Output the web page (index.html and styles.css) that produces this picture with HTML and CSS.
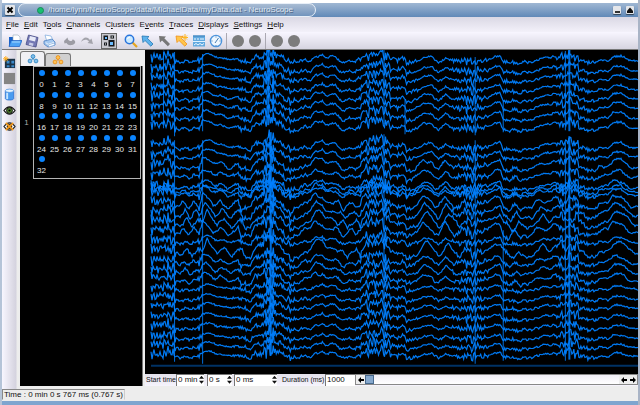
FILE: index.html
```html
<!DOCTYPE html>
<html lang="en">
<head>
<meta charset="utf-8">
<title>myData.dat - NeuroScope</title>
<link rel="stylesheet" href="styles.css">
</head>
<body>
<div class="window">
  <header class="titlebar">
    <button class="winbtn" aria-label="Close"><svg width="10" height="10" viewBox="0 0 10 10"><path d="M2.500 2.500L7.500 7.500M7.500 2.500L2.500 7.500" stroke="#000" stroke-width="2"/></svg></button>
    <div class="caption"><span class="lamp"></span><span>/home/lynn/NeuroScope/data/MichaelData/myData.dat - NeuroScope</span></div>
    <div class="winbtns">
      <button class="winbtn small" aria-label="Minimize"><svg width="8" height="8" viewBox="0 0 8 8"><path d="M2 6H7" stroke="#333" stroke-width="2"/></svg></button>
      <button class="winbtn small" aria-label="Maximize"><svg width="8" height="8" viewBox="0 0 8 8"><path d="M1 5L4 1.500L7 5V7H1Z" fill="#111"/></svg></button>
    </div>
  </header>

  <nav class="menubar">
    <button><u>F</u>ile</button><button><u>E</u>dit</button><button>T<u>o</u>ols</button><button><u>C</u>hannels</button><button>C<u>l</u>usters</button><button>E<u>v</u>ents</button><button><u>T</u>races</button><button><u>D</u>isplays</button><button><u>S</u>ettings</button><button><u>H</u>elp</button>
  </nav>

  <div class="toolbar">
    <div class="group">
      <button aria-label="Open"><svg viewBox="0 0 14 14"><path d="M1 3H5L6 4.500H11V12H1Z" fill="#1c63c8"/><path d="M5 1H10L12 3V8H5Z" fill="#fff" stroke="#9ab" stroke-width=".6"/><path d="M3 6.500H14L11.500 12.500H1Z" fill="#4da3f5" stroke="#1a5cc0" stroke-width=".7"/><path d="M4 8H12" stroke="#a8d8ff"/></svg></button>
      <button aria-label="Save"><svg viewBox="0 0 14 14"><path d="M3.500 1L13 3.500L11 13L1 10.500Z" fill="#7478b4" stroke="#484c88" stroke-width=".8"/><path d="M5 2L11 3.600L10 7.500L4 6Z" fill="#e8eaf8"/><path d="M4.500 8.500L8.500 9.500L8 12L3.700 11Z" fill="#c9cde8"/></svg></button>
      <button aria-label="Print"><svg viewBox="0 0 14 14"><path d="M3 1L9 2L11 6L5 8Z" fill="#fff" stroke="#7aa8dc" stroke-width=".7"/><path d="M2 7L10 5L13 8V11L6 13L2 10Z" fill="#a4c8f0" stroke="#4d7fc0" stroke-width=".8"/><path d="M4 8.500L6 10.500L12 8.500" fill="none" stroke="#fff"/><path d="M6 11L12 9L13 11L7 13Z" fill="#f3f8ff" stroke="#6696cf" stroke-width=".5"/></svg></button>
    </div>
    <div class="group">
      <button aria-label="Undo"><svg viewBox="0 0 14 14"><path d="M1 7L4.500 3.500L5 5.500C7 7.500 9 7.500 9.500 5.500C13 6 13.500 10 9 11C6 11.500 4 10.500 3.500 9L1.500 9.500Z" fill="#9c9ca4"/></svg></button>
      <button aria-label="Redo"><svg viewBox="0 0 14 14"><path d="M1 8C3 3 7 2 10 6L11.500 4.500L13 10L7.500 9L9 7.500C7 5 4 5 1 8Z" fill="#a4a4ac"/></svg></button>
    </div>
    <div class="group">
      <button class="pressed" aria-label="Show traces"><svg viewBox="0 0 14 14"><path d="M1.500 1.500H6V6H1.500ZM2 8.500H5V11.500H2ZM6.500 6H12.500V12.500H6.500ZM8.500 1.500H12V4.500H8.500Z" fill="#15181d"/><path d="M3 3H5V5H3ZM8 8H11V11H8Z" fill="#6bbcff"/><path d="M9.500 3H11M3 10H4" stroke="#fff"/></svg></button>
    </div>
    <div class="group">
      <button aria-label="Zoom"><svg viewBox="0 0 14 14"><path d="M8.500 8.500L13 13" stroke="#e5a51e" stroke-width="2.200"/><circle cx="5.500" cy="5.500" r="4.200" fill="#cbeaff" stroke="#2874dd" stroke-width="1.500"/><path d="M3.500 5Q4 3.200 6 3" fill="none" stroke="#fff"/></svg></button>
      <button aria-label="Select time"><svg viewBox="0 0 14 14"><path d="M1 2L8 2.500L6.300 4.200L12 10L9.800 12.200L4 6.500L2 8.500Z" fill="#5cb2ec" stroke="#2477b4" stroke-width=".8"/></svg></button>
      <button aria-label="Select"><svg viewBox="0 0 14 14"><path d="M1 2L8 2.500L6.300 4.200L12 10L9.800 12.200L4 6.500L2 8.500Z" fill="#777"/></svg></button>
      <button aria-label="Add event"><svg viewBox="0 0 14 14"><path d="M1 2L8 2.500L6.300 4.200L12 10L9.800 12.200L4 6.500L2 8.500Z" fill="#ffc54a" stroke="#f09018" stroke-width=".8"/><path d="M10 0V7M7 3.500H13M8 1.500L12 5.500M12 1.500L8 5.500" stroke="#ffb620"/></svg></button>
      <button aria-label="Draw time line"><svg viewBox="0 0 14 14"><path d="M1 1.500H13V12.500H1Z" fill="#61a9df"/><path d="M1 7.500H13" stroke="#dff2ff"/><path d="M2 11L4 9.500L6 11L8 9.500L10 11L12 9.500M3 4V6M6 4V6M9 4V6M11 4V6" stroke="#eef8ff" fill="none"/><path d="M1 2H13" stroke="#3c80b9"/></svg></button>
      <button aria-label="Clock"><svg viewBox="0 0 14 14"><circle cx="7" cy="7" r="5.600" fill="#eef7ff" stroke="#4e95dc" stroke-width="1.400"/><path d="M6 9L9.500 4M7 2.500V3.500M2.500 7H3.500M10.500 7H11.500M7 11V12" stroke="#477baf"/></svg></button>
    </div>
    <div class="group sep">
      <button aria-label="Previous event"><i class="disc"></i></button><button aria-label="Next event"><i class="disc"></i></button>
    </div>
    <div class="group sep">
      <button aria-label="Previous cluster"><i class="disc"></i></button><button aria-label="Next cluster"><i class="disc"></i></button>
    </div>
  </div>

  <main class="work">
    <aside class="sidebar">
      <button aria-label="New display"><svg viewBox="0 0 14 14"><path d="M2 3H13V13H2Z" fill="#1d3346"/><path d="M4 5H7V8H4ZM9 5H12V8H9ZM4 10H7V12H4ZM9 10H12V12H9Z" fill="#3b89c9"/><path d="M3 0V6M0 3H6M1 1L5 5M5 1L1 5" stroke="#ffad20"/></svg></button>
      <button aria-label="Discard"><svg viewBox="0 0 14 14"><path d="M1 1H13V13H1Z" fill="#858585"/></svg></button>
      <button aria-label="Trash"><svg viewBox="0 0 14 14"><path d="M2.500 3V11.500C3 13.500 11 13.500 11.500 11.500V3" fill="#4a9cf0" stroke="#2a6fd0" stroke-width=".8"/><path d="M4.500 5V12" stroke="#c8e6ff" stroke-width="2"/><ellipse cx="7" cy="3" rx="4.500" ry="1.800" fill="#e6f4ff" stroke="#4a90e0" stroke-width=".8"/></svg></button>
      <button aria-label="Show"><svg viewBox="0 0 14 14"><path d="M1 7Q7 -1 13 7Q7 15 1 7Z" fill="#fff" stroke="#111" stroke-width="1.300"/><circle cx="7" cy="7" r="3.200" fill="#508030" stroke="#111"/><circle cx="7" cy="7" r="1.200" fill="#000"/></svg></button>
      <button aria-label="Hide"><svg viewBox="0 0 14 14"><path d="M1 7Q7 -1 13 7Q7 15 1 7Z" fill="#fff" stroke="#222" stroke-width="1.300"/><circle cx="7" cy="7" r="3" fill="#443515"/><path d="M3 3L11 11M11 3L3 11" stroke="#f39a1e" stroke-width="1.800"/></svg></button>
    </aside>

    <section class="palette">
      <div class="tabs">
        <button class="tab active" aria-label="Anatomical groups"><svg viewBox="0 0 12 10"><g fill="#7fc0ec" stroke="#277fbd" stroke-width=".8"><circle cx="6" cy="2.500" r="1.900"/><circle cx="3" cy="7" r="1.900"/><circle cx="9" cy="7" r="1.900"/></g><path d="M6 4V6" stroke="#277fbd"/></svg></button>
        <button class="tab" aria-label="Spike groups"><svg viewBox="0 0 12 10"><g fill="#ffc354" stroke="#e98b13" stroke-width=".8"><circle cx="6" cy="2.500" r="1.900"/><circle cx="3" cy="7" r="1.900"/><circle cx="9" cy="7" r="1.900"/></g><path d="M6 4V6" stroke="#e98b13"/></svg></button>
      </div>
      <div class="groups">
        <span class="gid">1</span>
        <ul class="channels" id="channels"></ul>
      </div>
    </section>

    <section class="view">
      <svg class="traces" id="traces" viewBox="145 50 492 323" preserveAspectRatio="none"></svg>
      <form class="timebar">
        <label for="min">Start time</label>
        <span class="spin w-min"><input id="min" value="0 min"><i></i></span>
        <span class="spin w-sec"><input aria-label="Seconds" value="0 s"><i></i></span>
        <span class="spin w-ms"><input aria-label="Milliseconds" value="0 ms"><i></i></span>
        <label class="dur" for="dur">Duration (ms)</label>
        <span class="spin w-dur"><input id="dur" value="1000"></span>
        <div class="scroll">
          <button type="button" aria-label="Back"><svg viewBox="0 0 8 8"><path d="M1 4L4 1V3H7V5H4V7Z"/></svg></button>
          <input type="range" aria-label="Position" min="0" max="100" value="0">
          <button type="button" aria-label="Step back"><svg viewBox="0 0 8 8"><path d="M1 4L4 1V3H7V5H4V7Z"/></svg></button>
          <button type="button" aria-label="Forward"><svg viewBox="0 0 8 8"><path d="M7 4L4 1V3H1V5H4V7Z"/></svg></button>
        </div>
      </form>
    </section>
  </main>

  <footer class="status"><span>Time : 0 min 0 s 767 ms (0.767 s)</span></footer>
</div>
<script src="app.js"></script>
</body>
</html>
```
FILE: styles.css
```css
* { box-sizing: border-box; }
body {
  margin: 0;
  background: #fff;
  color: #111;
  font: 8px/10px "Liberation Sans", sans-serif;
}
button { margin: 0; padding: 0; border: 0; background: none; font: inherit; color: inherit; display: block; }
input { margin: 0; padding: 0; border: 0; font: inherit; color: inherit; min-width: 0; }
svg { display: block; }

.window {
  display: flex;
  flex-direction: column;
  min-height: 100vh;
  padding-top: 3px;
  border-left: 2px solid #b5c4d8;
  border-right: 2px solid #a9b4c6;
  border-bottom: 1px solid #8ba0ba;
  background: #ededed;
}

.titlebar {
  display: flex;
  align-items: center;
  height: 14px;
  background: linear-gradient(#9fb7d3, #6089b8);
  box-shadow: 0 -3px #fff;
}
.winbtn {
  width: 10px;
  height: 10px;
  margin-left: 3px;
  background: #e4e6ea;
  border-radius: 1px;
  box-shadow: 0 1px 1px #345;
}
.small { width: 8px; height: 8px; margin: 0; }
.winbtns { display: flex; gap: 5px; margin-left: auto; padding-right: 4px; }
.caption {
  display: flex;
  align-items: center;
  gap: 4px;
  width: 298px;
  height: 14px;
  margin-left: 3px;
  padding-left: 18px;
  border: 1px solid #e8eff8;
  border-radius: 8px;
  background: linear-gradient(#a9bcd3, #7294bd);
  color: #dfe6f0;
  text-shadow: 1px 1px #4b6585;
  white-space: nowrap;
}
.lamp { width: 7px; height: 7px; border-radius: 50%; background: #17c070; border: 1px solid #178a58; }

.menubar {
  display: flex;
  gap: 5px;
  height: 15px;
  padding: 3px 4px 0;
  background: linear-gradient(#dad8e4, #f3f1fa);
}
.menubar button { height: 10px; }
.menubar u { text-decoration-thickness: 1px; text-underline-offset: 1px; }

.toolbar {
  display: flex;
  align-items: center;
  gap: 3px;
  height: 18px;
  padding-left: 2px;
  background: linear-gradient(#f8f6ff, #d6d4e0);
  border-bottom: 1px solid #777;
}
.group { display: flex; gap: 3px; padding-left: 4px; }
.group svg { width: 14px; height: 14px; }
.sep { border-left: 1px solid #aaa8b2; }
.group button { display: grid; place-items: center; width: 14px; height: 16px; }
.group .pressed { width: 16px; background: #c8c8ce; border: 1px solid #666; }
.disc { width: 12px; height: 12px; border-radius: 50%; background: #7c7c7c; }

.work { display: flex; flex: 1; }
.sidebar {
  display: flex;
  flex-direction: column;
  align-items: center;
  gap: 1px;
  width: 18px;
  padding: 5px 2px 0 0;
  background: linear-gradient(90deg, #f8f6ff, #d4d2de 14px, #ededed 15px);
}
.sidebar button { width: 14px; height: 15px; }
.sidebar svg { width: 13px; height: 13px; }

.palette { display: flex; flex-direction: column; width: 123px; margin-bottom: 3px; }
.tabs { display: flex; height: 16px; align-items: flex-end; }
.tab {
  display: grid;
  place-items: center;
  width: 26px;
  height: 13px;
  background: #d0d0d0;
  border: 1px solid #777;
  border-bottom: 0;
  border-radius: 3px 3px 0 0;
}
.tab.active { height: 15px; width: 25px; background: #f0f0f4; }
.tab svg { width: 12px; height: 10px; }
.groups {
  display: flex;
  flex: 1;
  align-items: flex-start;
  background: #000;
  border-right: 1px solid #777;
  color: #e8e8e8;
}
.gid { width: 13px; padding-top: 52px; text-align: center; color: #aaa; }
.channels {
  display: grid;
  grid-template-columns: repeat(8, 13px);
  grid-auto-rows: 1fr;
  height: 113px;
  flex: 1;
  margin: 0 1px 0 0;
  padding: 3px 1px 0;
  border: 1px solid #b4b4b4;
  list-style: none;
}
.channels li { display: flex; flex-direction: column; align-items: center; gap: 4px; line-height: 9px; }
.channels li::before { content: ""; width: 6px; height: 6px; border-radius: 50%; background: #0a84ff; flex: none; }

.view { display: flex; flex-direction: column; flex: 1; min-width: 0; margin-left: 2px; background: #000; margin-bottom: 3px; }
.traces { flex: 1; width: 100%; height: 0; min-height: 0; background: #000; }
.trace { fill: none; stroke: #0080ff; stroke-width: 1.2; stroke-opacity: .95; }
.spike { stroke: #0080ff; stroke-opacity: .85; }
.flat { stroke: #003264; stroke-width: 2; }

.timebar {
  display: flex;
  align-items: center;
  height: 12px;
  padding-left: 1px;
  background: linear-gradient(#e2e0ea, #f6f4fd);
}
.timebar label { width: 30px; font-size: 7px; white-space: nowrap; }
.timebar .dur { width: 43px; margin-left: 5px; }
.spin { display: flex; height: 12px; background: #fff; border: 1px solid #777; border-width: 1px 0 0 1px; }
.spin input { width: 100%; padding-left: 1px; background: none; }
.w-min { width: 28px; margin-right: 3px; }
.w-sec { width: 25px; margin-right: 2px; }
.w-ms { width: 43px; }
.w-dur { width: 30px; }
.spin i {
  flex: none;
  width: 5px;
  height: 8px;
  margin: 1px 0 0;
  background: #111;
  clip-path: polygon(50% 0, 100% 3px, 0 3px, 0 5px, 100% 5px, 50% 8px, 0 5px, 0 3px);
}
.scroll { display: flex; flex: 1; min-width: 0; height: 11px; border: 1px solid #888; background: #fafafa; }
.scroll button { width: 9px; background: #eee; display: grid; place-items: center; }
.scroll svg { width: 8px; height: 8px; }
.scroll input { flex: 1; appearance: none; height: 9px; background: linear-gradient(#f0eef6, #fff); }
.scroll input::-webkit-slider-thumb { appearance: none; width: 9px; height: 9px; background: #86a8cd; border: 1px solid #47698d; }

.status {
  height: 16px;
  border-bottom: 4px solid #7fa5cf;
}
.status span { display: inline-block; height: 11px; padding: 0 1px; border: 1px solid #aaa; border-color: #888 #ccc #ededed #888; }
```
FILE: app.js
```js
const NS = 'http://www.w3.org/2000/svg';
const list = document.getElementById('channels');
for (let i = 0; i < 33; i++) {
  const li = document.createElement('li');
  li.textContent = i;
  list.append(li);
}

// Slow component shared by all channels: [time, offset] pairs.
const wave = [151,-2,160,-5,168,-6,174,-3,178,0,190,1,201,-1,203,-6,212,-6,220,-4,228,-1,240,0,250,1,255,-2,265,-6,270,-9,280,-4,290,1,300,-1,310,0,313,-4,320,-7,328,-3,335,-5,341,1,355,0,362,-3,370,-6,380,-8,387,-6,390,-1,403,-3,406,1,417,0,423,-3,430,-6,438,1,445,-4,452,0,460,0,470,1,480,0,490,-2,499,-5,503,1,518,1,535,0,550,-4,562,-5,570,-4,578,-1,590,1,605,0,613,-4,620,-6,628,0,638,-1];
// Extra slow component of the middle channels.
const deep = [151,0,178,2,183,-4,188,3,194,-3,199,3,203,-6,213,6,220,-2,228,6,238,-3,241,7,250,1,262,-6,270,-4,280,2,288,7,300,2,314,-8,322,-1,333,3,338,-3,343,5,352,-3,356,4,364,-4,380,-3,388,3,404,4,412,3,422,-7,435,5,444,-7,454,5,462,-2,470,2,486,-1,498,-4,508,7,514,-3,520,4,530,3,538,-4,544,2,556,-5,562,4,572,-2,584,4,598,1,612,-6,622,-4,630,3,638,2];
// Fast activity envelope: [from, to, amplitude].
const bursts = [[151,176,5],[176,198,1.4],[198,204,2.8],[240,253,2.2],[254,264,3],[264,274,6.5],[274,291,3],[291,306,1.6],[358,366,3],[366,390,5],[390,402,2],[402,418,2.4],[452,466,2.6],[466,478,4.2],[478,488,2],[500,522,1.6],[556,562,3],[562,578,5.5],[578,596,1.6]];

let seed = 7;
const rand = () => (seed = (seed * 16807) % 2147483647) / 2147483647 - 0.5;
const at = (pts, x) => {
  for (let i = 0; i < pts.length - 2; i += 2)
    if (x <= pts[i + 2]) return pts[i + 1] + (pts[i + 3] - pts[i + 1]) * (x - pts[i]) / (pts[i + 2] - pts[i]);
  return 0;
};
const level = x => (bursts.find(b => x >= b[0] && x < b[1]) || [0, 0, 1])[2];

const svg = document.getElementById('traces');
const add = (tag, attrs) => {
  const el = document.createElementNS(NS, tag);
  for (const k in attrs) el.setAttribute(k, attrs[k]);
  svg.append(el);
};

// Fast noise and a slower wobble, drawn once and reused by every channel.
const shared = [];
const wobble = [];
for (let x = 151; x <= 638; x++) shared.push(rand());
for (let x = 151; x <= 644; x += 3) wobble.push(x, rand() * 2.4);
const rows = [61,71,80,90,99,108,118,128,148,157,167,176,187,191,194,204,213,222,231,242,251,262,271,280,289,299,308,318,328,338,347,356];
rows.forEach((y, r) => {
  const core = r === 19 ? 0.2 : r < 15 ? 0.4 : r < 21 ? 1 : 0.55;
  const mid = r >= 10 && r < 24 ? core : r >= 4 && r < 8 ? 0.25 : 0;
  const gain = r < 8 ? 1 : r < 11 ? 1.15 : r < 23 ? 0.8 : 0.75;
  const own = [];
  for (let x = 151; x <= 644; x += 4) own.push(x, rand() * (mid > 0.3 ? 3 : 0.8));
  const phase = r >= 15 && r < 23 ? (r % 3) * 2 : 0;
  const pts = [];
  for (let x = 151; x <= 637; x++) {
    const n = (shared[x - 151] * 1.3 + rand() * 0.8) * level(x) * 1.3;
    const v = y + at(wave, x) * gain + at(deep, Math.max(151, x - phase)) * mid + at(wobble, x) + at(own, x) + n;
    pts.push(x + ',' + v.toFixed(1));
  }
  add('polyline', { class: 'trace', points: pts.join(' ') });
});

[[174.5,52,136,1],[174.5,140,361,1],[202.5,54,131,1],[202.5,140,363,1],[163.5,52,128,1],[268,50,125,2],[270.500,132,355,2],[383.500,50,124,1],[383.500,134,355,1],[404.500,100,134,1],[474.500,57,135,1],[474.500,140,363,1],[502.500,100,132,1],[502.500,230,360,1],[564.500,51,130,1],[568.500,50,131,2],[564.500,142,360,1],[568.500,136,359,2]]
  .forEach(([x, y1, y2, w]) => add('line', { class: 'spike', x1: x, x2: x, y1, y2, 'stroke-width': w }));
add('line', { class: 'flat', x1: 151, x2: 637, y1: 365, y2: 365 });
```
